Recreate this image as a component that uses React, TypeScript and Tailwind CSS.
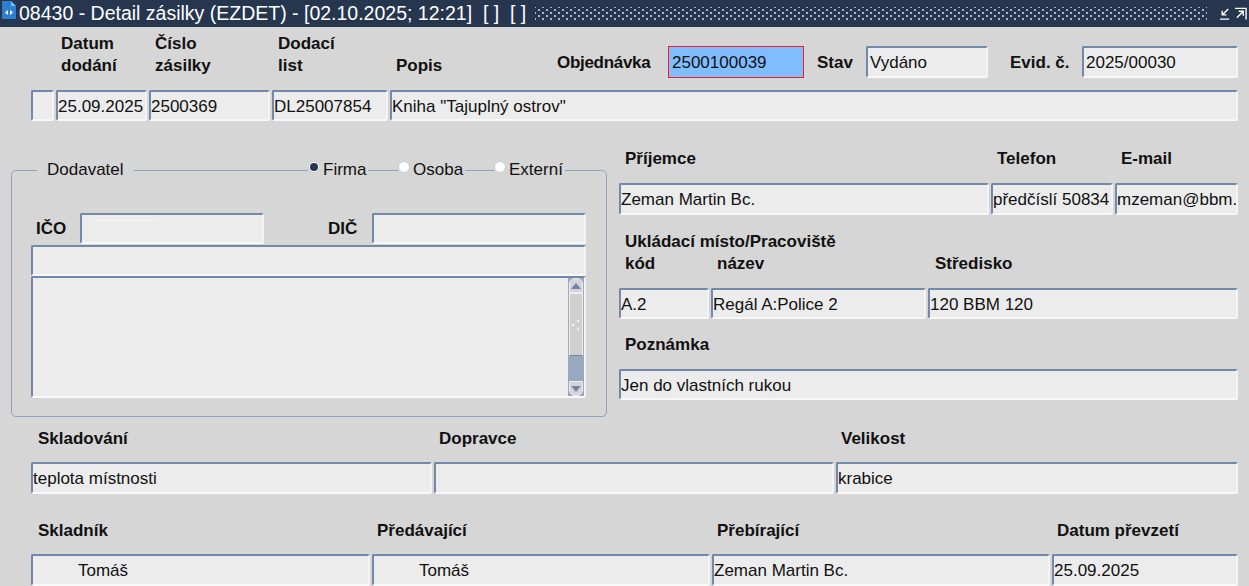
const fieldCls =
  'h-full shrink-0 flex items-center pt-[2px] overflow-hidden whitespace-nowrap rounded-[2px] bg-[#ececec] border-2 border-t-[#7389aa] border-l-[#7389aa] border-r-[#f4f4f4] border-b-[#f8f8f8] text-[17px] text-[#111]'

function Field({ w, text, indent }: { w: string; text?: string; indent?: string }) {
  return (
    <div className={`${fieldCls} ${w} ${indent ?? ''}`}>
      {text}
    </div>
  )
}

function Label({ children, cls }: { children: React.ReactNode; cls: string }) {
  return <div className={`shrink-0 font-bold text-[17px] leading-[22px] text-[#111] whitespace-nowrap ${cls}`}>{children}</div>
}

function Radio({ on, label, cls }: { on?: boolean; label: string; cls: string }) {
  return (
    <div className={`absolute top-[-13px] flex items-start gap-[3px] bg-[#d6d6d6] text-[17px] leading-[24px] text-[#111] ${cls}`}>
      <span className="mt-[3px] w-[12px] h-[12px] rounded-full bg-white border border-[#c4ccd8] flex items-center justify-center">
        {on && <span className="w-[8px] h-[8px] rounded-full bg-[#26364f]" />}
      </span>
      {label}
    </div>
  )
}

export default function App() {
  return (
    <div className="w-[1249px] h-[586px] overflow-hidden bg-[#d6d6d6] font-['Liberation_Sans',Arial,sans-serif]">
      {/* title bar */}
      <div className="h-[27px] bg-[#26364f] flex items-center text-white relative">
        <svg width="16" height="18" viewBox="0 0 16 18" className="ml-[2px] mb-[8px] shrink-0">
          <path d="M0 0h9l5 5v13H0z" fill="#2f7fd0" />
          <path d="M9 0l5 5H9z" fill="#7fb6ea" />
          <path d="M6 9l-3 2.5L6 14zM8 9l3 2.5L8 14z" fill="#fff" />
        </svg>
        <span className="ml-[1px] text-[19.5px] whitespace-pre leading-none w-[516px] shrink-0">
          08430 - Detail zásilky (EZDET) - [02.10.2025; 12:21]  [ ]  [ ]
        </span>
        <div className="h-[13px] w-[672px] shrink-0 bg-[radial-gradient(circle,#aab7ca_0.8px,transparent_1px),radial-gradient(circle,#aab7ca_0.8px,transparent_1px)] bg-[length:8px_6px] bg-[position:0_0,4px_3px]" />
        <svg width="12" height="12" viewBox="0 0 13 13" className="ml-[12px] shrink-0" fill="none" stroke="#fff" strokeWidth="1.5">
          <path d="M1 12h10M10 1L4 7M3.5 3v4.5H8" />
        </svg>
        <svg width="12" height="13" viewBox="0 0 13 13" className="ml-[4px] shrink-0" fill="none" stroke="#fff" strokeWidth="1.5">
          <path d="M0 1h12v12M2 11l7-7M4 4h5v5" />
        </svg>
      </div>

      {/* header labels + order fields */}
      <div className="h-[63px] flex pl-[61px] relative">
        <div className="flex items-end pb-[13px]">
          <Label cls="w-[94px]">Datum<br />dodání</Label>
          <Label cls="w-[123px]">Číslo<br />zásilky</Label>
          <Label cls="w-[118px]">Dodací<br />list</Label>
          <Label cls="w-[161px]">Popis</Label>
        </div>
        <div className="flex items-center h-[32px] mt-[19px]">
          <Label cls="w-[111px] mt-[2px] tracking-[-0.3px]">Objednávka</Label>
          <div className="w-[136px] h-full flex items-center pt-[2px] pl-[3px] bg-[#80bdff] border border-[#f02020] text-[17px] text-[#111]">
            2500100039
          </div>
          <Label cls="w-[49px] ml-[13px] mt-[2px]">Stav</Label>
          <Field w="w-[122px]" text="Vydáno" indent="pl-[2px]" />
          <Label cls="w-[72px] ml-[22px] mt-[2px]">Evid. č.</Label>
          <Field w="w-[156px]" text="2025/00030" indent="pl-[2px]" />
        </div>
      </div>

      <div className="h-[31px] flex gap-[2px] pl-[31px]">
        <Field w="w-[23px]" />
        <Field w="w-[91px]" text="25.09.2025" />
        <Field w="w-[121px]" text="2500369" />
        <Field w="w-[116px]" text="DL25007854" />
        <Field w="w-[848px]" text='Kniha "Tajuplný ostrov"' />
      </div>

      {/* middle */}
      <div className="flex pl-[11px] mt-[28px] h-[269px]">
        {/* Dodavatel */}
        <div className="w-[596px] shrink-0 mt-[21px] h-[247px] relative rounded-[5px] border border-[#91a1b9] pl-[19px]">
          <div className="absolute top-[-12px] left-[25px] px-[10px] bg-[#d6d6d6] text-[17px] leading-[22px] text-[#111]">Dodavatel</div>
          <Radio on label="Firma" cls="left-[296px] pr-[2px]" />
          <Radio label="Osoba" cls="left-[386px] pr-[2px]" />
          <Radio label="Externí" cls="left-[482px] pr-[2px]" />

          <div className="flex items-center h-[31px] mt-[42px]">
            <Label cls="w-[49px] pl-[5px]">IČO</Label>
            <div className="relative h-full">
              <Field w="w-[184px]" />
              <div className="absolute left-[18px] top-[7px] w-[60px] border-t border-dotted border-white" />
            </div>
            <Label cls="w-[108px] pl-[64px]">DIČ</Label>
            <Field w="w-[214px]" />
          </div>
          <div className="h-[31px] mt-[1px]">
            <Field w="w-[555px]" />
          </div>
          <div className="h-[122px] w-[555px] flex rounded-[2px] bg-[#ececec] border-2 border-t-[#7389aa] border-l-[#7389aa] border-r-[#f4f4f4] border-b-[#f8f8f8]">
            <div className="flex-1" />
            {/* scrollbar */}
            <div className="w-[16px] flex flex-col bg-[#98a8bf] border-x border-[#98a8bf]">
              <div className="h-[15px] rounded-t-[6px] bg-[#d4d4d4] border border-[#eee] flex items-center justify-center">
                <span className="w-0 h-0 border-x-[5px] border-x-transparent border-b-[6px] border-b-[#6f86a8]" />
              </div>
              <div className="h-[63px] bg-[#cfcfcf] border border-[#eee] border-b-[#6f86a8] flex items-center justify-center">
                <svg width="10" height="12" viewBox="0 0 10 12" fill="#f4f4f4">
                  <circle cx="7" cy="2" r="1.2" />
                  <circle cx="2" cy="6" r="1.2" />
                  <circle cx="7" cy="10" r="1.2" />
                </svg>
              </div>
              <div className="flex-1" />
              <div className="h-[15px] rounded-b-[6px] bg-[#d4d4d4] border border-[#eee] flex items-center justify-center">
                <span className="w-0 h-0 border-x-[5px] border-x-transparent border-t-[6px] border-t-[#6f86a8]" />
              </div>
            </div>
          </div>
        </div>

        {/* right column */}
        <div className="ml-[12px] flex flex-col w-[620px] shrink-0">
          <div className="flex h-[22px] mt-[-1px] pl-[6px] ">
            <Label cls="w-[372px]">Příjemce</Label>
            <Label cls="w-[124px]">Telefon</Label>
            <Label cls="w-[100px]">E-mail</Label>
          </div>
          <div className="h-[32px] mt-[13px] flex gap-[2px]">
            <Field w="w-[370px]" text="Zeman Martin Bc." />
            <Field w="w-[122px]" text="předčíslí 50834" />
            <Field w="w-[123px]" text="mzeman@bbm." />
          </div>
          <Label cls="pl-[6px] mt-[16px]">Ukládací místo/Pracoviště</Label>
          <div className="flex h-[22px] pl-[6px]">
            <Label cls="w-[92px]">kód</Label>
            <Label cls="w-[218px]">název</Label>
            <Label cls="w-[200px]">Středisko</Label>
          </div>
          <div className="h-[31px] mt-[13px] flex gap-[2px]">
            <Field w="w-[90px]" text="A.2" />
            <Field w="w-[215px]" text="Regál A:Police 2" />
            <Field w="w-[310px]" text="120 BBM 120" />
          </div>
          <Label cls="pl-[6px] mt-[15px]">Poznámka</Label>
          <div className="h-[31px] mt-[13px]">
            <Field w="w-[619px]" text="Jen do vlastních rukou" />
          </div>
        </div>
      </div>

      {/* storage */}
      <div className="flex h-[22px] mt-[10px] pl-[38px]">
        <Label cls="w-[401px]">Skladování</Label>
        <Label cls="w-[402px]">Dopravce</Label>
        <Label cls="w-[300px]">Velikost</Label>
      </div>
      <div className="h-[32px] mt-[12px] flex gap-[2px] pl-[31px]">
        <Field w="w-[401px]" text="teplota místnosti" />
        <Field w="w-[400px]" />
        <Field w="w-[402px]" text="krabice" />
      </div>

      {/* people */}
      <div className="flex h-[22px] mt-[26px] pl-[38px]">
        <Label cls="w-[339px]">Skladník</Label>
        <Label cls="w-[340px]">Předávající</Label>
        <Label cls="w-[340px]">Přebírající</Label>
        <Label cls="w-[180px]">Datum převzetí</Label>
      </div>
      <div className="h-[32px] mt-[12px] flex gap-[2px] pl-[31px]">
        <Field w="w-[339px]" text="Tomáš" indent="pl-[45px]" />
        <Field w="w-[338px]" text="Tomáš" indent="pl-[45px]" />
        <Field w="w-[338px]" text="Zeman Martin Bc." />
        <Field w="w-[186px]" text="25.09.2025" />
      </div>
    </div>
  )
}
